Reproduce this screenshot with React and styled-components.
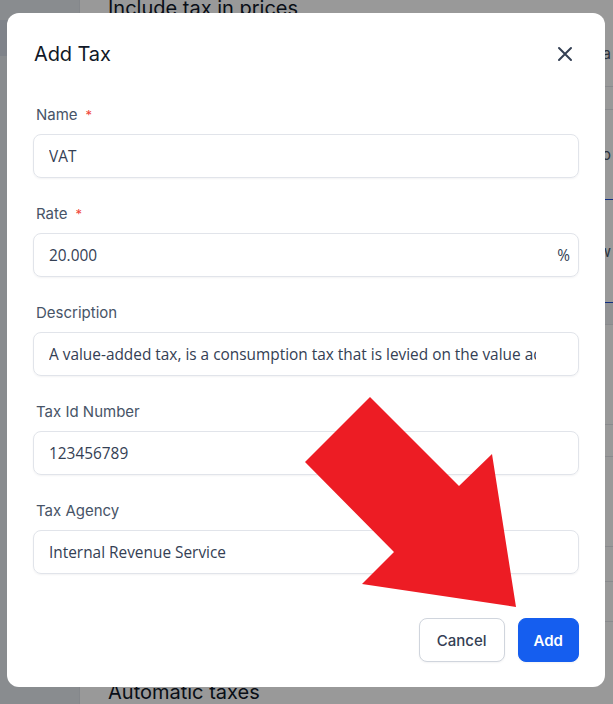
import React from 'react';
import styled, { createGlobalStyle } from 'styled-components';

const GlobalStyle = createGlobalStyle`
  html, body {
    margin: 0;
    padding: 0;
    overflow: hidden;
  }
  body {
    font-family: Inter, "Noto Sans", sans-serif;
    background: #fff;
  }
  * {
    box-sizing: border-box;
  }
`;

const Page = styled.div`
  display: grid;
  grid-template-columns: 80px 1fr;
  height: 704px;
  width: 613px;
`;

const Sidebar = styled.aside`
  background: #e4e9ee;
  border-right: 1px solid #dde2e8;
  padding-top: 20px;
`;

const NavItem = styled.div`
  height: 36px;
  background: ${(p) => (p.active ? '#d4dbe6' : 'transparent')};
`;

const Main = styled.main`
  display: flex;
  flex-direction: column;
  padding-left: 28px;
  background: #fff;
  overflow: hidden;
`;

const SectionTitle = styled.h2`
  margin: 0;
  font-size: 20px;
  font-weight: 400;
  line-height: 24px;
  color: #101828;
  margin-top: ${(p) => p.top || 0}px;
`;

const Rows = styled.div`
  display: flex;
  flex-direction: column;
  flex: 1;
`;

const Row = styled.div`
  height: ${(p) => p.h}px;
  border-bottom: ${(p) => (p.blue ? '1px solid #1d4ed8' : '1px solid #e5e7eb')};
  background: ${(p) => (p.shade ? '#f2f4f7' : 'transparent')};
  display: flex;
  align-items: center;
  justify-content: flex-end;
  padding-right: 2px;
  font-size: 15px;
  color: #475467;
`;

const Overlay = styled.div`
  position: fixed;
  inset: 0;
  background: rgba(0, 0, 0, 0.4);
  display: flex;
  justify-content: flex-start;
  align-items: flex-start;
  padding: 13px 0 0 7px;
`;

const Modal = styled.div`
  width: 598px;
  height: 674px;
  background: #fff;
  border-radius: 12px;
  padding: 28px 26px 25px 26px;
  display: flex;
  flex-direction: column;
`;

const Header = styled.div`
  display: flex;
  align-items: center;
  justify-content: space-between;
  height: 26px;
  padding-left: 1px;
  margin-bottom: 38px;
`;

const Title = styled.h1`
  margin: 0;
  font-size: 20px;
  font-weight: 400;
  color: #101828;
  letter-spacing: -0.1px;
`;

const CloseButton = styled.button`
  border: none;
  background: none;
  padding: 0;
  margin-right: 6px;
  width: 16px;
  height: 16px;
  display: flex;
  cursor: pointer;
`;

const Form = styled.div`
  display: flex;
  flex-direction: column;
  gap: 26px;
`;

const Field = styled.div`
  display: flex;
  flex-direction: column;
`;

const Label = styled.label`
  font-size: 15px;
  line-height: 20px;
  color: #475467;
  padding-left: 3px;
  margin-bottom: 9px;
  display: flex;
  align-items: center;
`;

const Required = styled.span`
  color: #f04438;
  font-size: 13px;
  margin-left: 8px;
`;

const InputBox = styled.div`
  position: relative;
  height: 44px;
  border: 1px solid #e1e4ea;
  border-radius: 8px;
  box-shadow: 0 1px 2px rgba(16, 24, 40, 0.05);
  display: flex;
  align-items: center;
`;

const Input = styled.input`
  flex: 1;
  min-width: 0;
  height: 100%;
  border: none;
  outline: none;
  background: transparent;
  padding: 0 42px 0 15px;
  font-family: "Open Sans", sans-serif;
  font-size: 15.4px;
  color: #344054;
`;

const Suffix = styled.span`
  position: absolute;
  right: 8px;
  font-family: "Open Sans", sans-serif;
  font-size: 15.4px;
  color: #344054;
`;

const Footer = styled.div`
  margin-top: auto;
  display: flex;
  justify-content: flex-end;
  gap: 13px;
`;

const Button = styled.button`
  height: 44px;
  padding: 0 ${(p) => (p.primary ? 15 : 17)}px;
  border-radius: 8px;
  font-family: Inter, sans-serif;
  font-size: 15px;
  font-weight: ${(p) => (p.primary ? 600 : 500)};
  color: ${(p) => (p.primary ? '#fff' : '#344054')};
  background: ${(p) => (p.primary ? '#155eef' : '#fff')};
  border: 1px solid ${(p) => (p.primary ? '#155eef' : '#d0d5dd')};
  box-shadow: 0 1px 2px rgba(16, 24, 40, 0.05);
  cursor: pointer;
`;

const Annotation = styled.svg`
  position: fixed;
  left: 0;
  top: 0;
  pointer-events: none;
`;

const fields = [
  { label: 'Name', value: 'VAT', required: true },
  { label: 'Rate', value: '20.000', required: true, suffix: '%' },
  {
    label: 'Description',
    value: 'A value-added tax, is a consumption tax that is levied on the value added at each stage of production',
  },
  { label: 'Tax Id Number', value: '123456789' },
  { label: 'Tax Agency', value: 'Internal Revenue Service' },
];

const bgRows = [
  { h: 67, text: 'Fa' },
  { h: 23 },
  { h: 90, text: 'o', blue: true },
  { h: 103, text: 'w', blue: true },
  { h: 22, shade: true },
  { h: 100 },
  { h: 32 },
  { h: 90 },
  { h: 35 },
  { h: 40 },
];

export default function App() {
  return (
    <>
      <GlobalStyle />
      <Page>
        <Sidebar>
          <NavItem active />
        </Sidebar>
        <Main>
          <SectionTitle top={-4}>Include tax in prices</SectionTitle>
          <Rows>
            {bgRows.map((r, i) => (
              <Row key={i} h={r.h} blue={r.blue} shade={r.shade}>
                {r.text}
              </Row>
            ))}
          </Rows>
          <SectionTitle>Automatic taxes</SectionTitle>
        </Main>
      </Page>

      <Overlay>
        <Modal>
          <Header>
            <Title>Add Tax</Title>
            <CloseButton aria-label="Close">
              <svg width="16" height="16" viewBox="0 0 16 16">
                <path d="M2 2 L14 14 M14 2 L2 14" stroke="#344054" strokeWidth="2" strokeLinecap="round" />
              </svg>
            </CloseButton>
          </Header>
          <Form>
            {fields.map((f) => (
              <Field key={f.label}>
                <Label>
                  {f.label}
                  {f.required && <Required>*</Required>}
                </Label>
                <InputBox>
                  <Input defaultValue={f.value} readOnly />
                  {f.suffix && <Suffix>{f.suffix}</Suffix>}
                </InputBox>
              </Field>
            ))}
          </Form>
          <Footer>
            <Button>Cancel</Button>
            <Button primary>Add</Button>
          </Footer>
        </Modal>
      </Overlay>

      <Annotation width="613" height="704" viewBox="0 0 613 704">
        <polygon
          points="370,397 459,486 492,454 516,607 362,584 394,552 305,462"
          fill="#ed1c24"
        />
      </Annotation>
    </>
  );
}
